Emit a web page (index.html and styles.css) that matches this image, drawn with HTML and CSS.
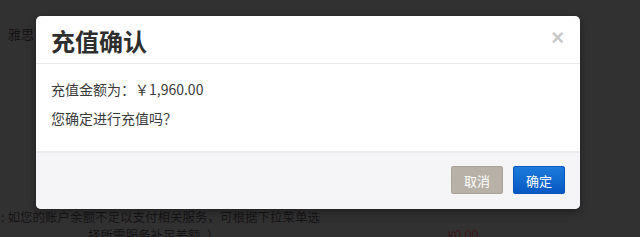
FILE: index.html
```html
<!DOCTYPE html>
<html lang="zh">
<head>
  <meta charset="UTF-8" />
  <title>充值确认</title>
  <link rel="stylesheet" href="styles.css">
</head>
<body>

  <div class="pagina">
    <div class="fila-top">雅思</div>
    <div class="aviso">
      <div class="aviso-l1"><span class="dos">:</span>如您的账户余额不足以支付相关服务，可根据下拉菜单选</div>
      <div class="aviso-l2">
        <span class="aviso-txt">择所需服务补足差额。）</span>
        <span class="precio">¥0.00</span>
      </div>
    </div>
  </div>

  <div class="modal">
    <div class="modal-header">
      <h3>充值确认</h3>
      <span class="cerrar">×</span>
    </div>
    <div class="modal-body">
      <p>充值金额为：￥1,960.00</p>
      <p>您确定进行充值吗？</p>
    </div>
    <div class="modal-footer">
      <button class="btn btn-gris">取消</button>
      <button class="btn btn-azul">确定</button>
    </div>
  </div>

</body>
</html>
```

FILE: styles.css
```css
/* ===== Base ===== */
* { margin:0; padding:0; box-sizing:border-box; }
html, body { height:100%; overflow:hidden; }
body {
  background:#323132;
  font-family:"Noto Sans CJK SC", "Liberation Sans", sans-serif;
  color:#151415;
  position:relative;
}

/* ===== Página de fondo ===== */
.pagina { padding:26px 0 0 0; font-size:13px; }
.fila-top { padding-left:8px; line-height:16px; }
.aviso { margin-top:166px; font-size:12.5px; line-height:18px; }
.aviso-l1 { white-space:nowrap; padding-left:1px; }
.dos { margin-right:3px; }
.aviso-l2 { display:flex; white-space:nowrap; }
.aviso-txt { margin-left:88px; }
.precio { margin-left:228px; color:#3a1518; }

/* ===== Modal ===== */
.modal {
  position:absolute; left:36px; top:16px;
  width:544px; height:193px;
  background:#fff; border-radius:5px;
  overflow:hidden;
  display:flex; flex-direction:column;
  box-shadow:0 3px 8px rgba(0,0,0,0.35);
}
.modal-header {
  height:48px; padding:0 15px;
  display:flex; justify-content:space-between; align-items:center;
  border-bottom:1px solid #e8e8e8;
}
.modal-header h3 {
  font-size:24px; font-weight:bold; color:#2e2e2e;
  line-height:28px; padding-top:2px;
}
.cerrar {
  font-family:"Liberation Sans", sans-serif;
  font-size:22px; font-weight:bold; color:#c9c9c9;
  line-height:20px; margin-top:-4px; margin-right:1px;
}
.modal-body {
  height:89px; padding:15px 15px 0;
  font-size:14px; color:#3a3a3a;
  border-bottom:2px solid #ececee;
}
.modal-body p { line-height:20px; margin-bottom:9px; }

.modal-footer {
  flex:1; background:#f5f5f7;
  display:flex; justify-content:flex-end; align-items:flex-start;
  gap:10px; padding:13px 15px 0;
}
.btn {
  width:52px; height:28px; border:none; border-radius:3px;
  font-family:inherit; font-size:13px; color:#fff;
}
.btn-gris { background:#b7b1a7; box-shadow:inset 0 0 0 1px #aaa399; }
.btn-azul { background:linear-gradient(#1d7ddc, #0657c2); box-shadow:inset 0 0 0 1px #0a55b8; }
```
